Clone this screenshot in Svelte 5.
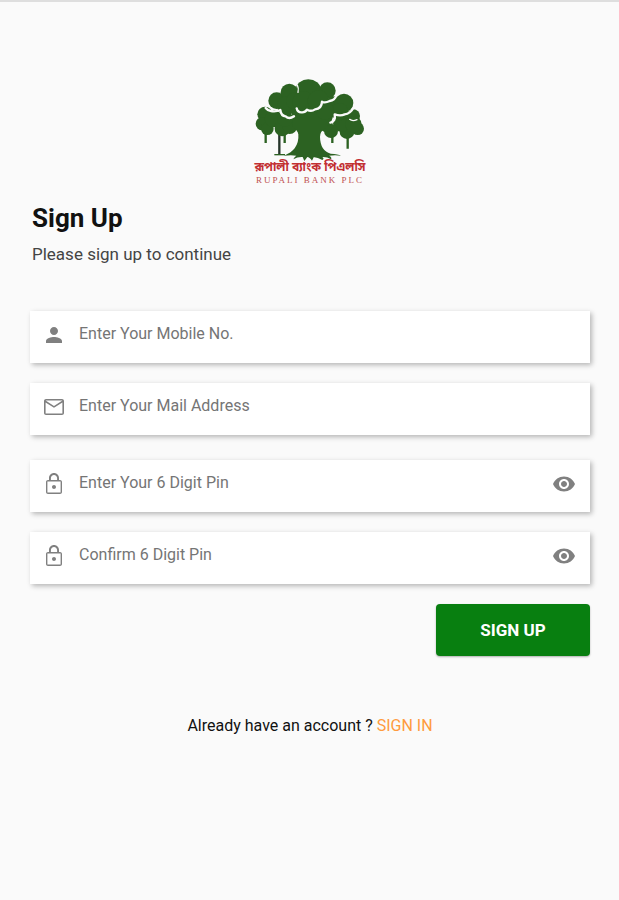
<script lang="ts">
  // Sign up screen: bank logo, four fields, submit button, link to sign in.
  let mobile = $state('');
  let mail = $state('');
  let pin = $state('');
  let confirmPin = $state('');
  let showPin = $state(false);
  let showConfirm = $state(false);

  const treeColor = '#2c6222';
  const gapColor = '#fafafa';
</script>

{#snippet lock()}
  <svg class="icon" viewBox="0 0 24 24" aria-hidden="true">
    <path
      d="M12 17c1.1 0 2-.9 2-2s-.9-2-2-2-2 .9-2 2 .9 2 2 2zm6-9h-1V6c0-2.76-2.24-5-5-5S7 3.24 7 6v2H6c-1.1 0-2 .9-2 2v10c0 1.1.9 2 2 2h12c1.1 0 2-.9 2-2V10c0-1.1-.9-2-2-2zM8.9 6c0-1.71 1.39-3.1 3.1-3.1s3.1 1.39 3.1 3.1v2H8.9V6zM18.6 20.6H5.4V9.4h13.2v11.2z"
    />
  </svg>
{/snippet}

{#snippet eye()}
  <svg class="icon" viewBox="0 0 24 24" aria-hidden="true">
    <path
      d="M12 4.5C7 4.5 2.73 7.61 1 12c1.73 4.39 6 7.5 11 7.5s9.27-3.11 11-7.5c-1.73-4.39-6-7.5-11-7.5zM12 17c-2.76 0-5-2.24-5-5s2.24-5 5-5 5 2.24 5 5-2.24 5-5 5zm0-8c-1.66 0-3 1.34-3 3s1.34 3 3 3 3-1.34 3-3-1.34-3-3-3z"
    />
  </svg>
{/snippet}

<main class="page">
  <div class="logo">
    <svg class="tree" viewBox="30 26 330 249" role="img" aria-label="Rupali Bank tree">
      <!-- thin hanging trunks -->
      <g fill="none" stroke={treeColor} stroke-width="7">
        <path d="M62 185V218M119 190V218M262 190V218M308 195V235" />
        <path d="M103 185V252" stroke="#26352b" />
        <path d="M88 253H120" stroke-width="4" />
      </g>
      <!-- lower side clusters -->
      <g fill={treeColor}>
        <circle cx="60" cy="132" r="23" />
        <circle cx="52" cy="160" r="20" />
        <circle cx="67" cy="175" r="19" />
        <circle cx="85" cy="145" r="26" />
        <circle cx="112" cy="175" r="23" />
        <circle cx="134" cy="168" r="23" />
        <circle cx="120" cy="145" r="24" />
        <circle cx="325" cy="137" r="20" />
        <circle cx="338" cy="175" r="19" />
        <circle cx="306" cy="184" r="22" />
        <circle cx="290" cy="158" r="26" />
        <circle cx="325" cy="162" r="25" />
        <circle cx="258" cy="182" r="21" />
        <circle cx="243" cy="165" r="20" />
      </g>
      <!-- trunk and roots -->
      <path
        fill={treeColor}
        d="M140 110L270 110Q264 160 242 173Q225 182 225 200Q226 242 257 250Q280 251 288 256Q270 254 252 256Q262 261 258 267Q246 259 232 260Q239 264 232 269Q216 260 206 261L201 271Q193 260 187 260L178 272L173 260Q158 259 145 267Q148 259 154 256Q139 253 117 256Q138 248 149 234Q162 216 160 192Q158 180 143 170Z"
      />
      <!-- crown -->
      <g fill={treeColor}>
        <circle cx="95" cy="91" r="25" />
        <circle cx="133" cy="66" r="26" />
        <ellipse cx="190" cy="56" rx="37" ry="29" />
        <circle cx="247" cy="61" r="25" />
        <circle cx="125" cy="106" r="29" />
        <circle cx="150" cy="92" r="27" />
        <circle cx="175" cy="95" r="33" />
        <circle cx="220" cy="92" r="32" />
        <circle cx="267" cy="104" r="26" />
        <circle cx="297" cy="98" r="28" />
        <circle cx="284" cy="124" r="26" />
        <circle cx="240" cy="122" r="27" />
      </g>
      <!-- light seams between the clusters -->
      <g fill="none" stroke={gapColor} stroke-width="7" stroke-linecap="round" stroke-linejoin="round">
        <path d="M62 113Q68 121 78 122Q92 125 106 119Q108 137 122 138Q132 148 147 138" />
        <path d="M155 114Q158 128 172 126Q181 126 186 118Q199 125 210 117Q230 116 231 94Q240 99 254 92Q269 90 274 76" />
        <path d="M256 157Q273 154 269 132Q286 138 299 132Q316 130 325 113" />
        <path d="M157 44Q162 54 159 66" stroke-width="4" />
        <path d="M314 147Q322 154 336 148" stroke-width="4" />
      </g>
    </svg>
    <span class="name-bn" lang="bn">রূপালী ব্যাংক পিএলসি</span>
    <span class="name-en">RUPALI BANK PLC</span>
  </div>

  <h1>Sign Up</h1>
  <p class="lead">Please sign up to continue</p>

  <form onsubmit={(e) => e.preventDefault()}>
    <div class="group">
      <label class="field">
        <svg class="icon" viewBox="0 0 24 24" aria-hidden="true">
          <path
            d="M12 12c2.21 0 4-1.79 4-4s-1.79-4-4-4-4 1.79-4 4 1.79 4 4 4zm0 2c-2.67 0-8 1.34-8 4v2h16v-2c0-2.66-5.33-4-8-4z"
          />
        </svg>
        <input type="tel" aria-label="Mobile number" placeholder="Enter Your Mobile No." bind:value={mobile} />
      </label>
      <label class="field">
        <svg class="icon" viewBox="0 0 24 24" aria-hidden="true">
          <path
            d="M22 6c0-1.1-.9-2-2-2H4c-1.1 0-2 .9-2 2v12c0 1.1.9 2 2 2h16c1.1 0 2-.9 2-2V6zm-1.6-.4L12 11 3.600 5.600h16.800zm0 12.800H3.600V7.400L12 12.700l8.400-5.300v11z"
          />
        </svg>
        <input type="email" aria-label="Mail address" placeholder="Enter Your Mail Address" bind:value={mail} />
      </label>
    </div>

    <div class="group">
      <div class="field">
        {@render lock()}
        <input
          type={showPin ? 'text' : 'password'}
          aria-label="6 digit pin"
          placeholder="Enter Your 6 Digit Pin"
          bind:value={pin}
        />
        <button type="button" class="toggle" aria-label="Show pin" onclick={() => (showPin = !showPin)}>
          {@render eye()}
        </button>
      </div>
      <div class="field">
        {@render lock()}
        <input
          type={showConfirm ? 'text' : 'password'}
          aria-label="Confirm pin"
          placeholder="Confirm 6 Digit Pin"
          bind:value={confirmPin}
        />
        <button type="button" class="toggle" aria-label="Show pin" onclick={() => (showConfirm = !showConfirm)}>
          {@render eye()}
        </button>
      </div>
    </div>

    <button type="submit" class="submit">SIGN UP</button>
  </form>

  <p class="switch">Already have an account ? <a href="#signin">SIGN IN</a></p>
</main>

<style>
  :global(body) {
    margin: 0;
    background: #fafafa;
  }
  .page {
    box-sizing: border-box;
    min-height: 100vh;
    padding: 77px 29px 32px 30px;
    border-top: 2px solid #dedede;
    font-family: Roboto, 'Liberation Sans', sans-serif;
    color: #111;
  }
  .logo {
    display: flex;
    flex-direction: column;
    align-items: center;
  }
  .tree {
    width: 110px;
    height: 83px;
  }
  .name-bn {
    font: bold 12px/13px 'Noto Sans Bengali', 'Noto Serif Bengali', serif;
    color: #c22f32;
    white-space: nowrap;
  }
  .name-en {
    font: 9px/11px 'Liberation Serif', serif;
    letter-spacing: 2px;
    color: #c0504f;
    white-space: nowrap;
  }
  h1 {
    margin: 16px 0 0 2px;
    font-size: 26px;
    line-height: 32px;
    font-weight: 700;
  }
  .lead {
    margin: 8px 0 0 2px;
    font-size: 17px;
    line-height: 24px;
    color: #444;
  }
  form {
    display: flex;
    flex-direction: column;
    gap: 25px;
    margin-top: 45px;
  }
  .group {
    display: flex;
    flex-direction: column;
    gap: 20px;
  }
  .field {
    display: flex;
    align-items: center;
    height: 52px;
    padding: 0 14px 4px 12px;
    box-sizing: border-box;
    background: #fff;
    box-shadow: 2px 2px 5px rgba(0, 0, 0, 0.28);
  }
  .icon {
    display: block;
    flex: none;
    width: 24px;
    height: 24px;
    fill: #808080;
  }
  input {
    flex: 1;
    min-width: 0;
    height: 100%;
    box-sizing: border-box;
    padding: 0 12px 4px 13px;
    border: 0;
    outline: 0;
    background: none;
    font: 16px/24px Roboto, 'Liberation Sans', sans-serif;
    color: #222;
  }
  input::placeholder {
    color: #757575;
    opacity: 1;
  }
  .toggle {
    padding: 0;
    border: 0;
    background: none;
    cursor: pointer;
  }
  .submit {
    align-self: flex-end;
    width: 154px;
    height: 52px;
    margin-top: -5px;
    border: 0;
    border-radius: 4px;
    background: #087f10;
    box-shadow: 0 1px 2px rgba(0, 0, 0, 0.3);
    font: 700 17px/24px Roboto, 'Liberation Sans', sans-serif;
    color: #fff;
    cursor: pointer;
  }
  .switch {
    margin: 58px 0 0;
    text-align: center;
    font-size: 16px;
    line-height: 24px;
  }
  .switch a {
    color: #ff9b3d;
    text-decoration: none;
  }
</style>
